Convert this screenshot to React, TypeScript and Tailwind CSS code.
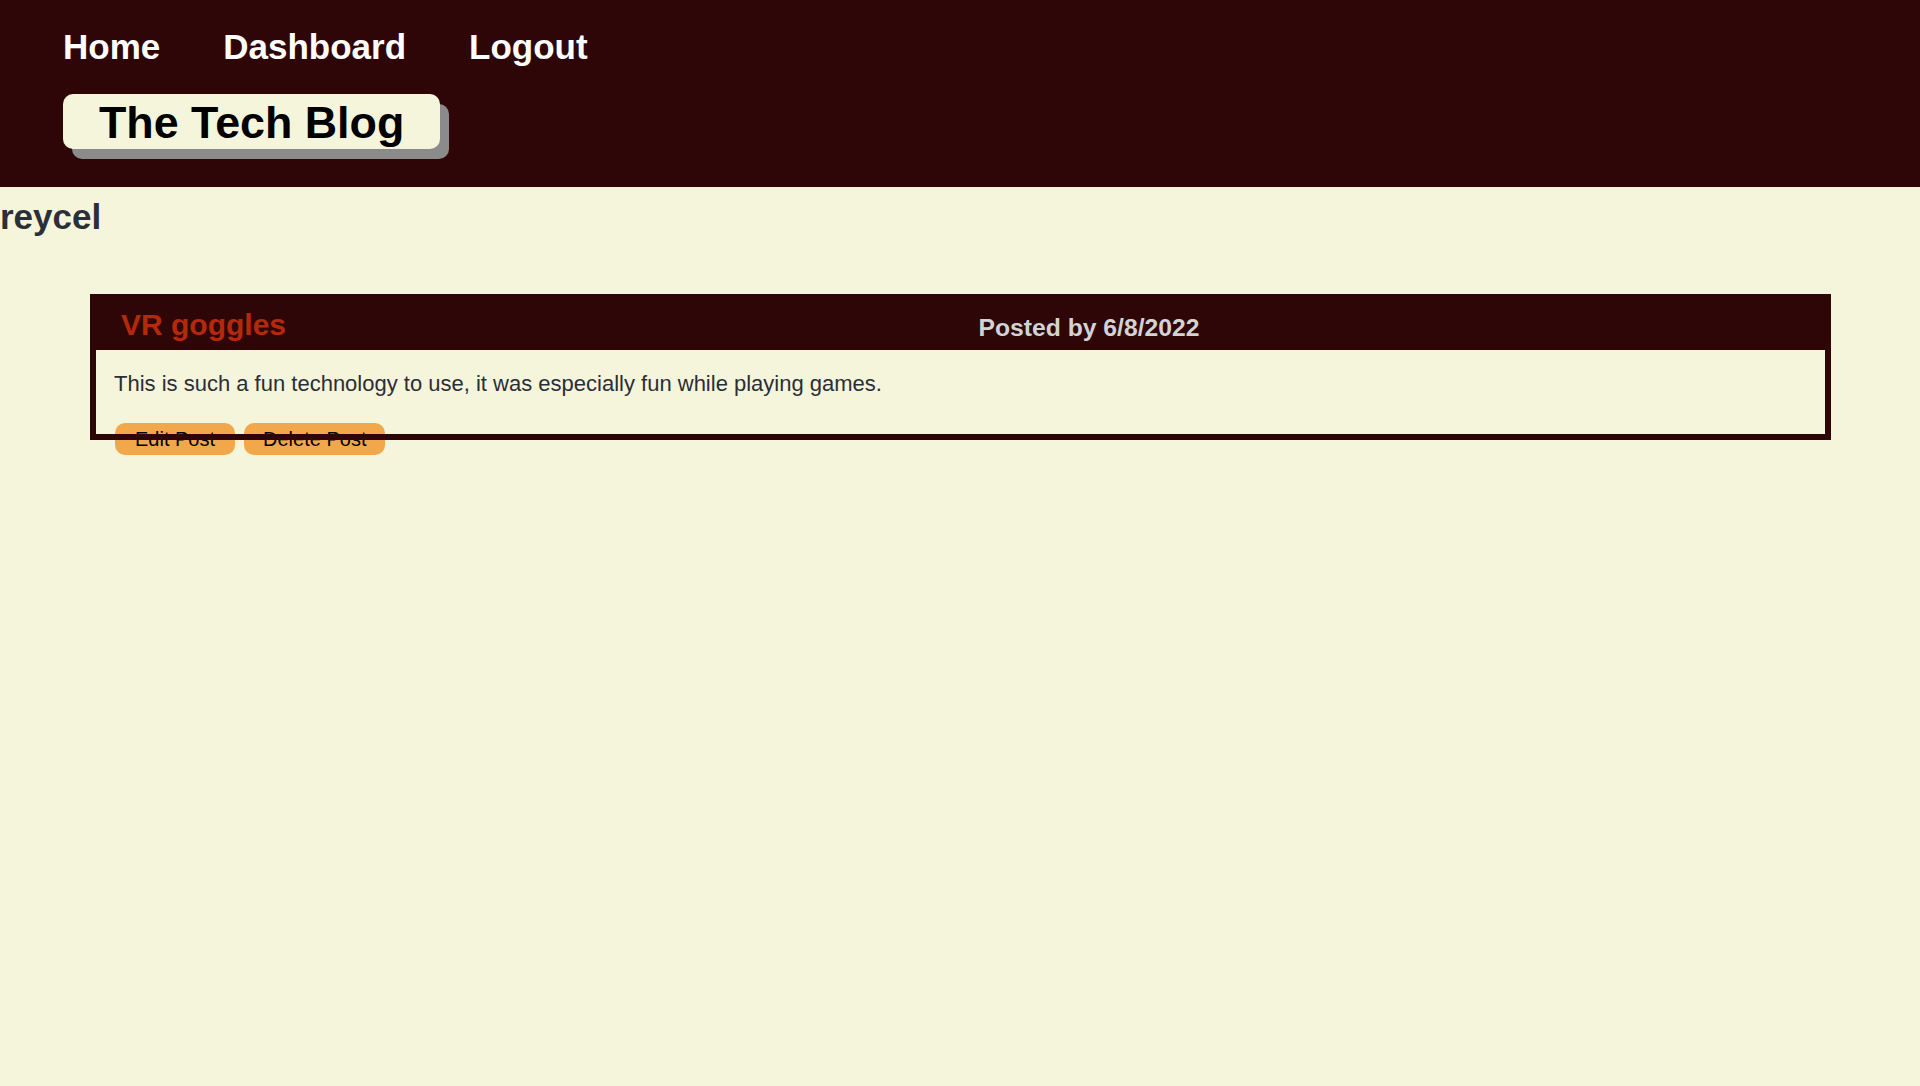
import React from "react";

export default function App() {
  return (
    <div
      className="min-h-screen w-full bg-[#f5f5dc]"
      style={{ fontFamily: '"Liberation Sans", Arial, sans-serif' }}
    >
      <header className="h-[187px] bg-[#2f0607] pl-[63px] pt-[27px]">
        <nav className="flex gap-[63px] text-[35px] font-bold leading-[1.15] text-white">
          <a href="#">Home</a>
          <a href="#">Dashboard</a>
          <a href="#">Logout</a>
        </nav>
        <div className="mt-[27px] inline-flex h-[55px] items-center rounded-[10px] bg-[#f5f5dc] px-[36px] shadow-[9px_10px_0_#8b8b8b]">
          <h1 className="text-[44.8px] font-bold leading-[50px] text-black">The Tech Blog</h1>
        </div>
      </header>

      <main>
        <h2 className="mt-[10px] text-[35px] font-bold leading-[1.15] text-[#2b3038]">reycel</h2>

        <div className="relative ml-[90px] mr-[89px] mt-[57px] h-[146px]">
          <div className="grid h-[56px] grid-cols-2 items-start bg-[#2f0607] px-[6px]">
            <h3 className="mt-[14px] pl-[25px] text-[30px] font-bold leading-[1.15] text-[#b5290b]">VR goggles</h3>
            <p className="mt-[20px] pl-[18px] text-[24.7px] font-bold leading-[1.15] text-[#d3d3d3]">Posted by 6/8/2022</p>
          </div>
          <div className="pl-[24px] pt-[21px]">
            <p className="text-[22px] leading-[1.15] text-[#2b2e36]">
              This is such a fun technology to use, it was especially fun while playing games.
            </p>
            <div className="mt-[26px] flex gap-[9px] pl-[1px]">
              <button className="h-[32px] rounded-[10px] bg-[#f2a84a] px-[20px] text-[20px] leading-none text-black">
                Edit Post
              </button>
              <button className="h-[32px] rounded-[10px] bg-[#f2a84a] px-[19px] text-[20px] leading-none text-black">
                Delete Post
              </button>
            </div>
          </div>
          <div className="pointer-events-none absolute inset-0 border-[6px] border-[#2f0607]" />
        </div>
      </main>
    </div>
  );
}
